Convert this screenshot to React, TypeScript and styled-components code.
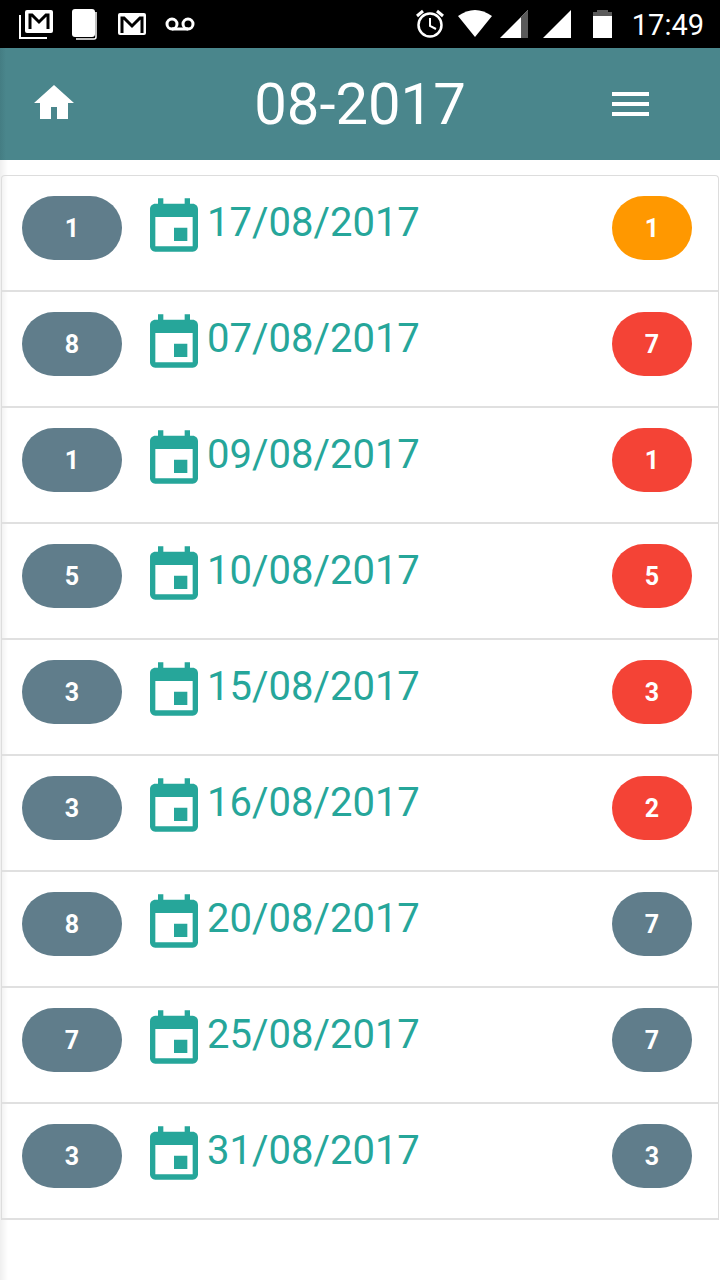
import styled, { createGlobalStyle } from "styled-components";

const GlobalStyle = createGlobalStyle`
  html, body { margin: 0; padding: 0; background: #fff; }
  body { font-family: Roboto, "Liberation Sans", sans-serif; }
`;

type Tone = "slate" | "orange" | "red";

const toneColors: Record<Tone, string> = {
  slate: "#607d8b",
  orange: "#ff9800",
  red: "#f44336",
};

const rows: { left: number; date: string; right: number; tone: Tone }[] = [
  { left: 1, date: "17/08/2017", right: 1, tone: "orange" },
  { left: 8, date: "07/08/2017", right: 7, tone: "red" },
  { left: 1, date: "09/08/2017", right: 1, tone: "red" },
  { left: 5, date: "10/08/2017", right: 5, tone: "red" },
  { left: 3, date: "15/08/2017", right: 3, tone: "red" },
  { left: 3, date: "16/08/2017", right: 2, tone: "red" },
  { left: 8, date: "20/08/2017", right: 7, tone: "slate" },
  { left: 7, date: "25/08/2017", right: 7, tone: "slate" },
  { left: 3, date: "31/08/2017", right: 3, tone: "slate" },
];

const Page = styled.div`
  width: 720px;
  height: 1280px;
  overflow: hidden;
  background: linear-gradient(to right, #efefef 0, #fff 8px);
`;

const StatusBar = styled.div`
  height: 48px;
  background: #000;
  color: #fff;
  display: flex;
  align-items: center;
  justify-content: space-between;
  padding: 0 16px 0 19px;
`;

const StatusGroup = styled.div`
  display: flex;
  align-items: center;
`;

const Clock = styled.span`
  font-size: 29px;
  margin: 1px 0 0 19px;
`;

const Header = styled.header`
  height: 112px;
  background: linear-gradient(to right, #447d83 0, #4a868c 6px);
  display: grid;
  grid-template-columns: 1fr auto 1fr;
  align-items: center;
  padding: 0 34px;
`;

const HomeIcon = styled.svg`
  fill: #fff;
  margin-top: -2px;
`;

const Title = styled.h1`
  margin: 0;
  color: #fff;
  font-size: 58px;
  font-weight: 400;
  line-height: 110px;
`;

const Menu = styled.div`
  width: 37px;
  justify-self: end;
  margin-right: 37px;
  display: flex;
  flex-direction: column;
  gap: 6px;
`;

const MenuBar = styled.span`
  height: 4px;
  background: #fff;
`;

const List = styled.ul`
  list-style: none;
  margin: 15px 1px 0;
  padding: 0;
  border-top: 1px solid #ddd;
  border-left: 1px solid #ddd;
  border-right: 1px solid #ddd;
  border-radius: 4px 4px 0 0;
`;

const Row = styled.li`
  height: 116px;
  box-sizing: border-box;
  border-bottom: 2px solid #e0e0e0;
  display: flex;
  align-items: flex-start;
  padding: 20px 26px 0 20px;
`;

const Pill = styled.span<{ $tone: Tone; $width: number }>`
  width: ${(p) => p.$width}px;
  height: 64px;
  border-radius: 32px;
  background: ${(p) => toneColors[p.$tone]};
  color: #fff;
  font-size: 25px;
  font-weight: 700;
  display: flex;
  align-items: center;
  justify-content: center;
  flex-shrink: 0;
`;

const DateCell = styled.div`
  flex: 1;
  display: flex;
  align-items: flex-start;
  margin-left: 28px;
  color: #26a69a;
`;

const CalendarIcon = styled.svg`
  width: 48px;
  height: 54px;
  margin-top: 2px;
  fill: currentColor;
`;

const DateText = styled.span`
  font-size: 40px;
  line-height: 48px;
  margin: 3px 0 0 9px;
`;

const App = () => {
  return (
    <Page>
      <GlobalStyle />
      <StatusBar>
        <StatusGroup>
          <svg width="178" height="32" viewBox="0 0 178 32" fill="none">
            <path d="M1 7v23h27" stroke="#fff" strokeWidth="2" />
            <rect x="6" y="2" width="28" height="23" rx="2" fill="#fff" />
            <path d="M11 21V7h2l7 7 7-7h2v14" stroke="#000" strokeWidth="3" />
            <rect x="53" y="1" width="23" height="28" rx="3" fill="#fff" />
            <path d="M77 4v25a2 2 0 0 1-2 2H57" stroke="#fff" strokeWidth="1.5" />
            <rect x="99" y="5" width="28" height="22" rx="2" fill="#fff" />
            <path d="M103 25V10h2l8 8 8-8h2v15" stroke="#000" strokeWidth="3" />
            <circle cx="153" cy="16" r="5" stroke="#fff" strokeWidth="3" />
            <circle cx="169" cy="16" r="5" stroke="#fff" strokeWidth="3" />
            <path d="M153 21h16" stroke="#fff" strokeWidth="3" />
          </svg>
        </StatusGroup>
        <StatusGroup>
          <svg width="197" height="32" viewBox="0 0 197 32" fill="none">
            <circle cx="14" cy="17" r="11.5" stroke="#fff" strokeWidth="2.5" />
            <path d="M14 10v8l6 3" stroke="#fff" strokeWidth="2" />
            <path d="M1 8l6-5M27 8l-6-5" stroke="#fff" strokeWidth="3" />
            <path d="M42 8Q59-4 76 8L59 29z" fill="#fff" />
            <path d="M84 30L112 2v28z" fill="#fff" />
            <path d="M105 9l7-7v28h-7z" fill="#5a5a5a" />
            <path d="M127 30L155 2v28z" fill="#fff" />
            <rect x="177" y="7" width="19" height="23" fill="#fff" />
            <rect x="181" y="2" width="11" height="3" fill="#5a5a5a" />
            <rect x="177" y="4" width="19" height="4" fill="#5a5a5a" />
          </svg>
          <Clock>17:49</Clock>
        </StatusGroup>
      </StatusBar>
      <Header>
        <HomeIcon width="40" height="36" viewBox="0 0 40 36">
          <path d="M20 0L40 18H34V34H23V22H17V34H6V18H0z" />
        </HomeIcon>
        <Title>08-2017</Title>
        <Menu>
          <MenuBar />
          <MenuBar />
          <MenuBar />
        </Menu>
      </Header>
      <List>
        {rows.map((row) => (
          <Row key={row.date}>
            <Pill $tone="slate" $width={100}>{row.left}</Pill>
            <DateCell>
              <CalendarIcon viewBox="3 1 18 20">
                <path d="M17 12h-5v5h5v-5zM16 1v2H8V1H6v2H5c-1.110 0-1.990.9-1.990 2L3 19c0 1.100.89 2 2 2h14c1.100 0 2-.9 2-2V5c0-1.100-.9-2-2-2h-1V1h-2zm3 18H5V8h14v11z" />
              </CalendarIcon>
              <DateText>{row.date}</DateText>
            </DateCell>
            <Pill $tone={row.tone} $width={80}>{row.right}</Pill>
          </Row>
        ))}
      </List>
    </Page>
  );
};

export default App;
